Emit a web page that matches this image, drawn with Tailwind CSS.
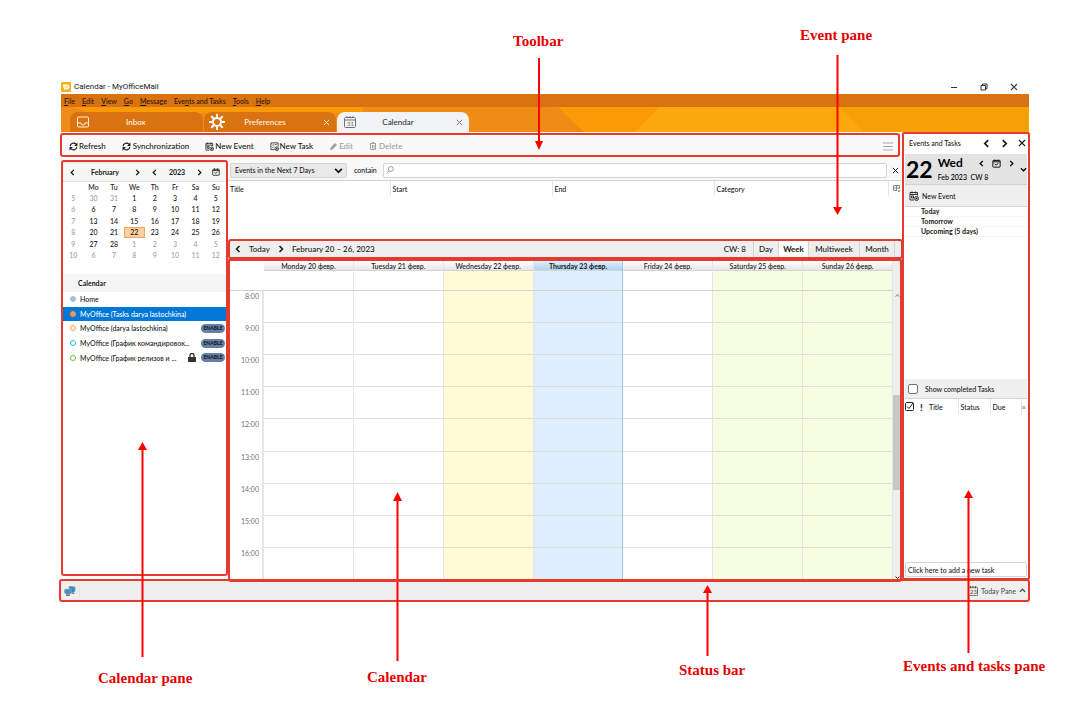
<!DOCTYPE html>
<html lang="en">
<head>
<meta charset="utf-8">
<title>Calendar - MyOfficeMail</title>
<script src="https://cdn.jsdelivr.net/npm/@tailwindcss/browser@4"></script>
</head>
<body class="bg-white">
<svg class="hidden" aria-hidden="true">
  <symbol id="left" viewBox="0 0 8 8"><path d="M5.5 1 2.5 4l3 3" fill="none" stroke="currentColor" stroke-width="1.5"/></symbol>
  <symbol id="right" viewBox="0 0 8 8"><path d="M2.5 1l3 3-3 3" fill="none" stroke="currentColor" stroke-width="1.5"/></symbol>
  <symbol id="down" viewBox="0 0 8 8"><path d="M1 2.5l3 3 3-3" fill="none" stroke="currentColor" stroke-width="1.5"/></symbol>
  <symbol id="x" viewBox="0 0 8 8"><path d="M1 1l6 6M7 1 1 7" fill="none" stroke="currentColor" stroke-width="1.1"/></symbol>
  <symbol id="sync" viewBox="0 0 16 16"><g fill="none" stroke="currentColor" stroke-width="2"><path d="M2 7.500a6 6 0 0 1 10.500-3.500M14 8.500a6 6 0 0 1-10.500 3.500"/></g><path d="M15 1v6H9zM1 15V9h6z" fill="currentColor"/></symbol>
  <symbol id="calcheck" viewBox="0 0 16 16"><g fill="none" stroke="currentColor" stroke-width="1.600"><rect x="1.500" y="2.500" width="13" height="12" rx="1"/><path d="M1.500 5h13M5 8.500l2.500 2.500L11.500 7M5 1v3M11 1v3"/></g></symbol>
  <symbol id="newev" viewBox="0 0 20 20"><g fill="none" stroke="currentColor" stroke-width="1.700"><path d="M10 18H2V3h15v6M2 7h15M6 1v4M13 1v4M5 10h4v4H5z"/><circle cx="15" cy="15" r="4"/><path d="M15 13v4M13 15h4"/></g></symbol>
  <symbol id="newtask" viewBox="0 0 20 20"><g fill="none" stroke="currentColor" stroke-width="1.700"><path d="M10 17H2V2h16v8M5 6l1.500 1.500L9 5M11 6h4M5 11l1.500 1.500L9 10"/><circle cx="15" cy="15" r="4"/><path d="M15 13v4M13 15h4"/></g></symbol>
</svg>
<main class="relative min-h-screen overflow-hidden pt-20 pr-[46px] pb-[101px] pl-[61px] font-[Lato,'Noto_Sans',sans-serif] text-[7px] leading-[10px] text-neutral-900">
  <!-- Application window -->
  <section aria-label="MyOfficeMail window">
    <header class="flex h-[14px] items-center justify-between">
      <h1 class="flex items-center gap-[3px] font-[Roboto,sans-serif] text-[8px]">
        <svg class="size-[10px]" viewBox="0 0 10 10"><rect width="10" height="10" rx="1" fill="#f6b21b"/><path d="M2 2.500h3.500A2.500 2.500 0 1 1 4.500 7L3 8.500V6.500Q2 5 2 2.500z" fill="#fff"/><path d="M4 4.500l1 1 2-1.500" fill="none" stroke="#f6b21b"/></svg>
        Calendar - MyOfficeMail</h1>
      <div class="flex items-center gap-[22px] pr-[11px]">
        <button aria-label="Minimize"><svg class="size-[8px]" viewBox="0 0 8 8"><path d="M1 4.500h6" stroke="#333"/></svg></button>
        <button aria-label="Restore"><svg class="size-[8px]" viewBox="0 0 8 8" fill="none" stroke="#333"><path d="M1 2.500h4.500V7H1zM2.500 2.500V1H7v4.500H5.500"/></svg></button>
        <button aria-label="Close"><svg class="size-[8px] text-neutral-700"><use href="#x"/></svg></button>
      </div>
    </header>
    <nav class="flex h-[13px] items-center gap-[7px] bg-[#d97311] pl-[3px] font-medium text-[#2a1604]">
      <button><u>F</u>ile</button><button><u>E</u>dit</button><button><u>V</u>iew</button><button><u>G</u>o</button><button><u>M</u>essage</button><button>Eve<u>n</u>ts and Tasks</button><button><u>T</u>ools</button><button><u>H</u>elp</button>
    </nav>
    <div class="relative h-[25px] bg-[#ef8c17]">
      <svg class="absolute inset-0 size-full" viewBox="0 0 968 25" preserveAspectRatio="none">
        <path d="M12 0h290v6H28z" fill="#fb9a06"/><path d="M497 0h471v25H523z" fill="#fb9a06"/><path d="M599 0h369v25H574z" fill="#fba80f"/><path d="M778 0h190v25H803z" fill="#f5a105"/>
      </svg>
      <div class="relative flex h-full items-end gap-px pl-[9px] text-[8px] font-medium text-[#fff3e0]">
        <button class="flex h-[20px] w-[133px] items-center rounded-t-[8px] bg-[#d97311] pl-[7px]">
          <svg class="size-[12px]" viewBox="0 0 12 12" fill="none" stroke="currentColor"><rect x=".5" y="1" width="11" height="10" rx="1"/><path d="M1 7h3q0 2 2 2t2-2h3"/></svg><span class="ml-[37px]">Inbox</span></button>
        <div class="flex h-[20px] w-[132px] items-center rounded-t-[8px] bg-[#d97311] pr-[6px] pl-[5px]">
          <svg class="size-[16px] text-white" viewBox="0 0 16 16"><g stroke="currentColor" fill="none"><circle cx="8" cy="8" r="4" stroke-width="2"/><path stroke-width="2" d="M8 0v3M8 13v3M0 8h3M13 8h3M2.300 2.300l2.200 2.200M11.500 11.500l2.200 2.200M13.700 2.300l-2.200 2.200M4.500 11.500l-2.200 2.200"/></g></svg>
          <button class="flex-1 pr-[18px]">Preferences</button><button aria-label="Close Preferences"><svg class="size-[7px]"><use href="#x"/></svg></button></div>
        <div class="flex h-[20px] w-[132px] items-center rounded-t-[8px] bg-[#f2f3f5] pr-[6px] pl-[7px] text-[#333]">
          <svg class="size-[12px] text-neutral-500" viewBox="0 0 12 12" fill="none" stroke="currentColor"><rect x=".5" y="1.500" width="11" height="10" rx="1"/><path d="M.5 4h11M3 0v2M6 0v2M9 0v2"/><text x="3" y="10" font-size="6" fill="currentColor" stroke="none">31</text></svg>
          <button class="flex-1 pr-[16px]">Calendar</button><button aria-label="Close Calendar"><svg class="size-[7px] text-neutral-500"><use href="#x"/></svg></button></div>
      </div>
    </div>

    <div class="flex h-[448px]">
      <div class="flex min-w-0 flex-1 flex-col">
        <div class="relative flex h-[28px] items-center gap-[16px] bg-[#f9f9f9] pr-[10px] pl-[8px] text-[8px] font-medium">
          <button class="flex items-center gap-px"><svg class="size-[9px]"><use href="#sync"/></svg>Refresh</button>
          <button class="flex items-center gap-[2px]"><svg class="size-[9px]"><use href="#sync"/></svg>Synchronization</button>
          <button class="flex items-center gap-px"><svg class="size-[9px]"><use href="#newev"/></svg>New Event</button>
          <button class="flex items-center gap-px"><svg class="size-[9px]"><use href="#newtask"/></svg>New Task</button>
          <button class="flex items-center gap-px text-neutral-400"><svg class="size-[9px]" viewBox="0 0 9 9"><path d="M1 8l.7-2.500L6 1l2 2-4.500 4.500z" fill="currentColor"/></svg>Edit</button>
          <button class="flex items-center gap-[2px] text-neutral-400"><svg class="size-[8px]" viewBox="0 0 8 8" fill="none" stroke="currentColor"><path d="M1 1.500h6M3 .5h2M1.500 2v5.500h5V2M3.500 3v3.500M5 3v3.500"/></svg>Delete</button>
          <button class="ml-auto" aria-label="Menu"><svg class="h-[9px] w-[10px]" viewBox="0 0 10 9" stroke="#aaa"><path d="M0 1h10M0 4.500h10M0 8h10"/></svg></button>
          <i class="pointer-events-none absolute top-[1px] right-[3px] bottom-[3px] -left-px rounded-[3px] border-2 border-[#e63a2f]"></i>
        </div>
        <div class="flex min-h-0 flex-1">
          <!-- Mini month and calendar list -->
          <aside class="relative w-[167px] shrink-0 px-[2px] pt-[2px]">
            <div class="flex h-[20px] items-center border-y border-dotted border-neutral-300 bg-[#f5f5f5] px-[6px] font-bold">
              <button aria-label="Previous month"><svg class="size-[7px]"><use href="#left"/></svg></button><span class="flex-1 text-center">February</span><button aria-label="Next month"><svg class="size-[7px]"><use href="#right"/></svg></button>
              <button class="ml-[10px]" aria-label="Previous year"><svg class="size-[7px]"><use href="#left"/></svg></button><span class="w-[38px] text-center">2023</span><button aria-label="Next year"><svg class="size-[7px]"><use href="#right"/></svg></button>
              <button class="ml-[9px]" aria-label="Go to today"><svg class="size-[8px]"><use href="#calcheck"/></svg></button>
            </div>
            <table id="month" class="h-[79px] w-full table-fixed text-center font-medium"><thead><tr class="h-[10px]"><th></th></tr></thead><tbody></tbody></table>
            <h2 class="mt-[13px] flex h-[18px] items-center bg-[#f5f5f5] pl-[15px] font-bold">Calendar</h2>
            <ul id="cals" class="-mx-[2px] flex h-[73px] flex-col font-medium"></ul>
            <i class="pointer-events-none absolute top-0 right-0 bottom-[4px] left-0 rounded-[3px] border-2 border-[#e63a2f]"></i>
          </aside>
          <div class="flex min-w-0 flex-1 flex-col">
            <div class="flex h-[21px] items-center gap-[7px] border-b border-neutral-300 bg-[#f9f9f9] pr-[4px] pl-[2px]">
              <div class="relative"><select aria-label="Filter" class="block h-[15px] w-[117px] appearance-none rounded-[2px] border border-neutral-300 bg-[#e9e9e9] pl-[4px] font-medium"><option>Events in the Next 7 Days</option></select><svg class="pointer-events-none absolute top-[3px] right-[4px] size-[9px]"><use href="#down"/></svg></div>
              <label for="q" class="font-medium">contain</label>
              <div class="relative -ml-px flex-1"><input id="q" class="block h-[15px] w-full rounded-[2px] border border-neutral-300 bg-white pl-[14px]"><svg class="absolute top-[3px] left-[3px] size-[8px]" viewBox="0 0 8 8" fill="none" stroke="#888" stroke-width=".8"><circle cx="4.800" cy="3" r="2.500"/><path d="M3 5 .8 7.500"/></svg></div>
              <button class="-ml-[2px]" aria-label="Close search"><svg class="size-[7px]"><use href="#x"/></svg></button>
            </div>
            <div class="min-h-0 flex-1"><table class="w-full table-fixed text-left"><thead><tr class="h-[15px]"><th class="w-[24%] pl-[2px] font-medium">Title</th><th class="w-[24%] border-l border-neutral-200 pl-[2px] font-medium">Start</th><th class="w-[24%] border-l border-neutral-200 pl-[2px] font-medium">End</th><th class="border-l border-neutral-200 pl-[2px] font-medium">Category</th><th class="w-[15px] border-l border-neutral-200 pl-[4px]"><svg class="size-[7px]" viewBox="0 0 7 7" fill="none" stroke="#888"><path d="M6.500 4V.5h-6v5H4M.5 3h6M3.500.5v5M6 5v2M5 6h2"/></svg></th></tr></thead></table></div>
            <div class="relative flex h-[18px] items-center bg-[#eee] pr-[8px] pl-[6px] text-[8px] font-medium">
              <button aria-label="Previous week"><svg class="size-[8px]"><use href="#left"/></svg></button><button class="mx-[7px]">Today</button><button aria-label="Next week"><svg class="size-[8px]"><use href="#right"/></svg></button><span class="ml-[7px]">February 20 – 26, 2023</span>
              <span class="mr-[7px] ml-auto">CW: 8</span>
              <button class="h-full w-[25px] border-l border-neutral-300">Day</button><button class="h-full w-[31px] border-x border-neutral-300 bg-white font-bold">Week</button><button class="h-full w-[50px]">Multiweek</button><button class="h-full w-[36px] border-x border-neutral-300">Month</button>
              <i class="pointer-events-none absolute -inset-y-px right-0 left-0 rounded-[3px] border-2 border-[#e63a2f]"></i>
            </div>
            <div class="relative flex h-[322px] pt-[3px]">
              <div class="flex min-w-0 flex-1 flex-col">
                <div id="days" class="flex h-[30px] shrink-0 border-b border-neutral-300 pl-[36px]"></div>
                <div class="flex min-h-0 flex-1"><div id="hours" class="flex w-[36px] flex-col border-r-2 border-neutral-200 pr-[3px] text-right text-neutral-500"></div><div id="cols" class="flex flex-1"></div></div>
              </div>
              <div class="mr-[2px] flex w-[8px] flex-col items-center bg-[#eee] pt-[32px]">
                <svg class="size-[5px]" viewBox="0 0 8 8"><path d="M1 6l3-4 3 4" fill="none" stroke="#555"/></svg><span class="mt-[97px] h-[95px] w-full bg-[#c8c8c8]"></span><svg class="mt-auto size-[5px]"><use href="#down"/></svg>
              </div>
              <i class="pointer-events-none absolute top-0 right-px -bottom-[2px] left-0 z-10 rounded-[3px] border-x-2 border-y-3 border-[#e63a2f]"></i>
            </div>
          </div>
        </div>
      </div>
      <!-- Events and tasks -->
      <aside class="relative flex w-[126px] shrink-0 flex-col px-[2px]">
        <div class="flex h-[22px] items-center gap-[9px] pr-px pl-[4px]"><h2 class="flex-1 font-medium">Events and Tasks</h2><button aria-label="Previous"><svg class="size-[9px]"><use href="#left"/></svg></button><button aria-label="Next"><svg class="size-[9px]"><use href="#right"/></svg></button><button aria-label="Close pane"><svg class="size-[8px]"><use href="#x"/></svg></button></div>
        <div class="flex h-[30px] items-center bg-[#e3e3e3] pl-px text-black">
          <strong class="text-[23px] leading-[28px]">22</strong>
          <div class="ml-[5px] flex-1"><div class="flex items-center"><strong class="flex-1 text-[12px] leading-[14px]">Wed</strong><button aria-label="Previous day"><svg class="size-[7px]"><use href="#left"/></svg></button><button class="mx-[7px]" aria-label="Today"><svg class="size-[9px]"><use href="#calcheck"/></svg></button><button aria-label="Next day"><svg class="size-[7px]"><use href="#right"/></svg></button></div><p class="mt-[2px] font-medium">Feb 2023 &nbsp;CW 8</p></div>
          <button class="ml-[5px]" aria-label="Expand"><svg class="size-[7px]"><use href="#down"/></svg></button>
        </div>
        <button class="flex h-[23px] shrink-0 items-center gap-[3px] border-y border-neutral-300 bg-[#efefef] pl-[4px] font-medium"><svg class="size-[10px]"><use href="#newev"/></svg>New Event</button>
        <ul class="font-bold"><li class="border-b border-neutral-100 pl-[16px] leading-[9px]">Today</li><li class="border-b border-neutral-100 pl-[16px] leading-[9px]">Tomorrow</li><li class="border-b border-neutral-100 pl-[16px] leading-[9px]">Upcoming (5 days)</li></ul>
        <label class="mt-auto flex h-[20px] items-center gap-[7px] border-b border-neutral-300 bg-[#efefef] pl-[3px] font-medium"><input type="checkbox" class="size-[10px] appearance-none rounded-[2px] border border-neutral-500 bg-white">Show completed Tasks</label>
        <div class="h-[163px]"><table class="w-full table-fixed text-left"><thead><tr class="h-[15px]"><th class="w-[11px]"><svg class="size-[9px]" viewBox="0 0 9 9" fill="none" stroke="#222"><rect x=".5" y=".5" width="8" height="8" rx="1"/><path d="M2 4.500l2 2L8 1"/></svg></th><th class="w-[11px] text-center text-[10px]">!</th><th class="w-[31px] pl-[2px] font-medium">Title</th><th class="w-[32px] border-l border-neutral-200 pl-[2px] font-medium">Status</th><th class="w-[31px] border-l border-neutral-200 pl-[2px] font-medium">Due</th><th class="border-l border-neutral-200 text-neutral-400">≡</th></tr></thead></table></div>
        <input aria-label="Click here to add a new task" placeholder="Click here to add a new task" class="mb-[3px] h-[15px] shrink-0 rounded-[2px] border border-neutral-300 pl-[2px] font-medium placeholder:text-neutral-900">
        <i class="pointer-events-none absolute inset-y-0 -right-px -left-px rounded-[2px] border-2 border-[#e63a2f]"></i>
      </aside>
    </div>
    <footer class="relative flex h-[21px] items-center gap-[3px] bg-[#efefef] px-[3px]">
      <svg class="h-[10px] w-[12px]" viewBox="0 0 12 10"><path d="M5 .5l6 .5v4l-2 2H6z" fill="#2a8fd8" stroke="#999"/><path d="M.8 3.500l6.200-.5v4l-1.500 1.500h-3L.8 7z" fill="#2a9be0" stroke="#999"/><path d="M2 9.500h4M8.500 7.500h2" stroke="#777"/></svg><span class="h-[13px] border-r border-neutral-200"></span>
      <button class="ml-auto flex items-center gap-[3px] font-medium text-neutral-600"><svg class="size-[10px]" viewBox="0 0 12 12" fill="none" stroke="currentColor"><rect x=".5" y="1.500" width="11" height="10" rx="1"/><path d="M3 0v3M6 0v3M9 0v3"/><text x="2.500" y="10" font-size="7" fill="currentColor" stroke="none">23</text></svg>Today Pane<svg class="size-[7px] rotate-180"><use href="#down"/></svg></button>
      <i class="pointer-events-none absolute -top-px -right-px -bottom-px -left-[2px] rounded-[3px] border-2 border-[#e63a2f]"></i>
    </footer>
  </section>

  <!-- Callouts -->
  <svg class="pointer-events-none absolute top-0 left-0 h-[702px] w-[1075px]" stroke="#f00" stroke-width="2" fill="#f00">
    <path d="M539 58v85M837.500 55v155M142.500 657V450M397.500 661V500M707.500 656V592M968.500 653V497"/>
    <path stroke="none" d="M535 141h8l-4 9zM833 207h9l-4.500 8zM138 450h9l-4.500-8zM393 501h9l-4.500-9zM703 593h9l-4.500-8zM964 498h9l-4.500-8z"/>
  </svg>
  <div class="font-['Liberation_Serif',serif] text-[15px] leading-[16px] font-bold whitespace-nowrap text-[#e60000]">
    <p class="absolute top-[33px] left-[513px]">Toolbar</p><p class="absolute top-[27px] left-[800px]">Event pane</p><p class="absolute top-[670px] left-[98px]">Calendar pane</p><p class="absolute top-[669px] left-[367px]">Calendar</p><p class="absolute top-[662px] left-[679px]">Status bar</p><p class="absolute top-[658px] left-[903px]">Events and tasks pane</p>
  </div>
</main>
<script>
const $ = id => document.getElementById(id);
document.querySelector('#month thead tr').innerHTML += ['Mo','Tu','We','Th','Fr','Sa','Su'].map(d => `<th class="font-medium">${d}</th>`).join('');
let rows = '';
for (let w = 0; w < 6; w++) {
  rows += `<tr><td class="text-neutral-400">${w + 5}</td>`;
  for (let d = 0; d < 7; d++) {
    const n = w * 7 + d - 1, inside = n >= 1 && n <= 28;
    const v = n < 1 ? 31 + n : n > 28 ? n - 28 : n;
    rows += `<td class="${n === 22 ? 'bg-[#fdd0a0] outline outline-[#e9a865] -outline-offset-1' : inside ? '' : 'text-neutral-400'}">${v}</td>`;
  }
  rows += '</tr>';
}
document.querySelector('#month tbody').innerHTML = rows;
const lock = '<svg class="mr-[5px] h-[9px] w-[8px]" viewBox="0 0 8 9"><rect y="4" width="8" height="5" fill="#333"/><path d="M2 4V2.500a2 2 0 0 1 4 0V4" fill="none" stroke="#333" stroke-width="1.300"/></svg>';
$('cals').innerHTML = [
  ['Home','border-[#a3bfe6] bg-[#a3bfe6]',0,0],
  ['MyOffice (Tasks darya lastochkina)','border-[#f79646] bg-[#f79646]',0,0,'bg-[#0078d7] text-white'],
  ['MyOffice (darya lastochkina)','border-[#f79646]',1,0],
  ['MyOffice (График командировок...','border-[#19c5e8]',1,0],
  ['MyOffice (График релизов и ...','border-[#63c832]',1,1]
].map(([t,c,e,l,s]) => `<li class="flex flex-1 items-center pr-[3px] pl-[9px] ${s || ''}"><span class="mr-[4px] size-[6px] shrink-0 rounded-full border ${c}"></span><span class="flex-1 whitespace-nowrap">${t}</span>${l ? lock : ''}${e ? '<button class="h-[9px] w-[24px] shrink-0 rounded-full bg-[#667fa9] text-center text-[5px] leading-[9px] font-black">ENABLE</button>' : ''}</li>`).join('');
const tint = ['border-neutral-200','border-neutral-200','bg-[#fffbd6] border-neutral-200','bg-[#dfeffd] border-[#9fc8e8]','border-neutral-200','bg-[#f5fee0] border-neutral-200','bg-[#f5fee0] border-neutral-200'];
const names = ['Monday 20','Tuesday 21','Wednesday 22','Thursday 23','Friday 24','Saturday 25','Sunday 26'];
$('days').innerHTML = names.map((n,i) => `<div class="flex-1 basis-0 border-r ${tint[i]}"><div class="h-[10px] border-b border-neutral-300 text-center whitespace-nowrap ${i === 3 ? 'bg-linear-to-b from-[#dfeffd] to-[#b0d4f0] font-bold' : 'bg-linear-to-b from-white to-[#e6e6e6] font-medium'}">${n} февр.</div></div>`).join('');
$('hours').innerHTML = [8,9,10,11,12,13,14,15,16].map(h => `<span class="flex-1 basis-0">${h}:00</span>`).join('');
$('cols').innerHTML = tint.map(t => `<div class="flex flex-1 basis-0 flex-col border-r ${t}">${'<span class="flex-1 basis-0 border-b border-neutral-300/70"></span>'.repeat(9)}</div>`).join('');
</script>
</body>
</html>
